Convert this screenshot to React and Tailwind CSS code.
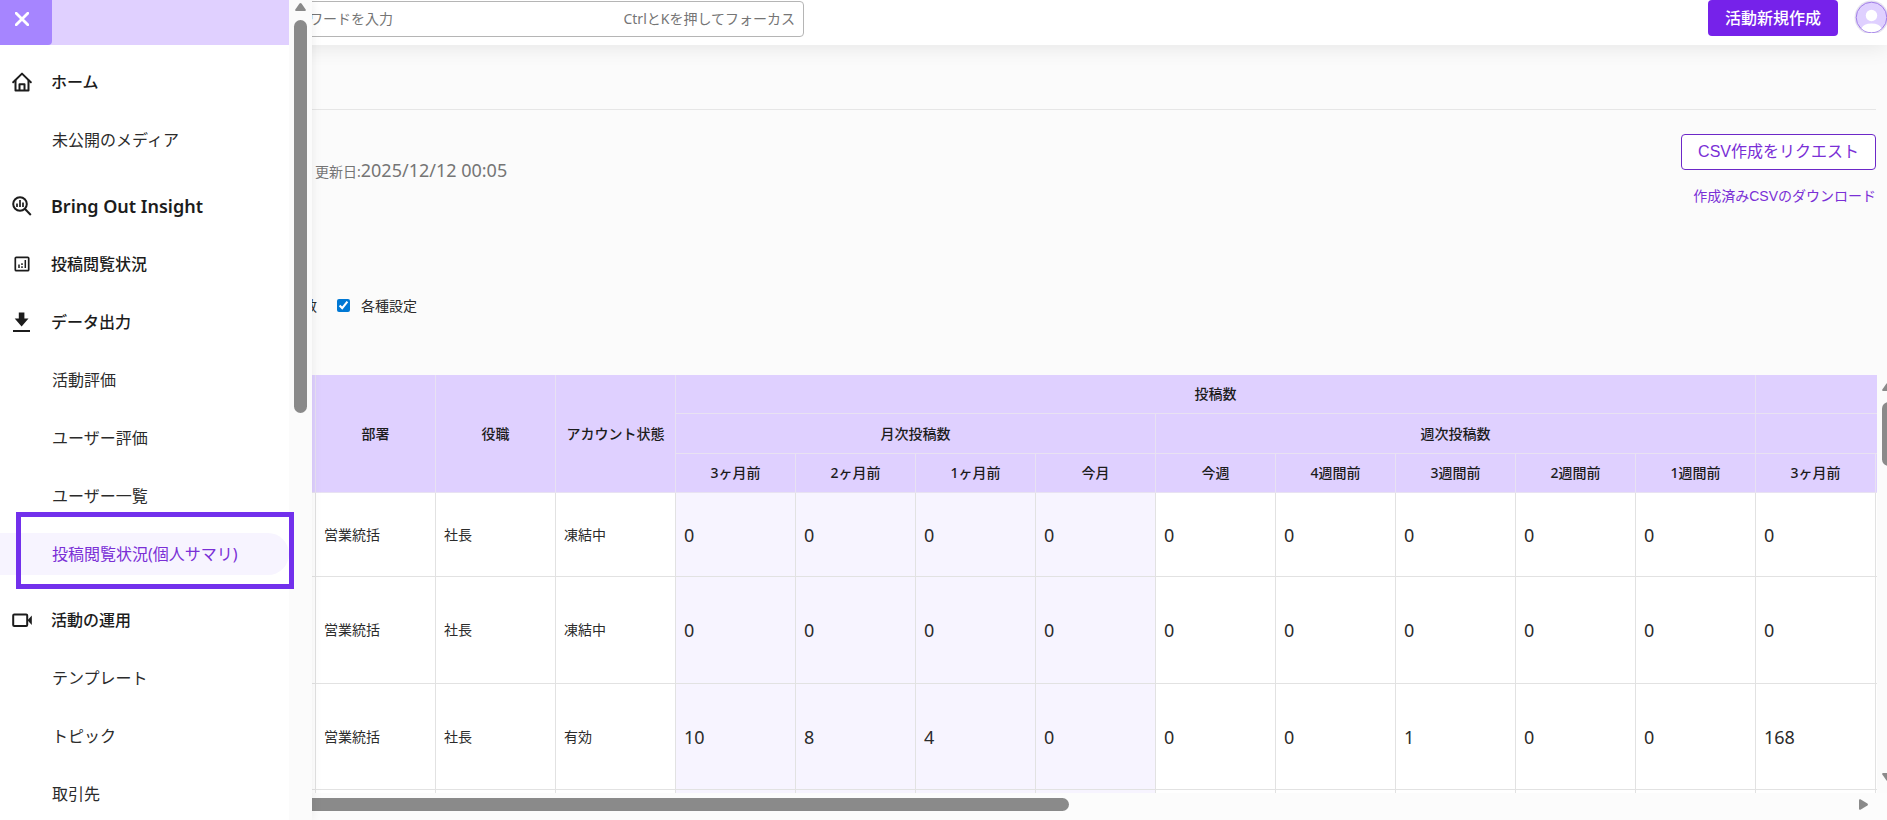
import React, { useState } from "react";
import clsx from "clsx";

const menu = [
  {
    title: "ホーム",
    icon: "home",
    items: ["未公開のメディア"],
  },
  { title: "Bring Out Insight", icon: "insight", items: [] },
  { title: "投稿閲覧状況", icon: "report", items: [] },
  {
    title: "データ出力",
    icon: "download",
    items: [
      "活動評価",
      "ユーザー評価",
      "ユーザー一覧",
      "投稿閲覧状況(個人サマリ)",
    ],
  },
  {
    title: "活動の運用",
    icon: "video",
    items: ["テンプレート", "トピック", "取引先"],
  },
];

const activeItem = "投稿閲覧状況(個人サマリ)";

const monthly = ["3ヶ月前", "2ヶ月前", "1ヶ月前", "今月"];
const weekly = ["今週", "4週間前", "3週間前", "2週間前", "1週間前"];

const rows = [
  {
    height: "h-[84px]",
    info: ["営業統括", "社長", "凍結中"],
    counts: [0, 0, 0, 0, 0, 0, 0, 0, 0, 0],
  },
  {
    height: "h-[107px]",
    info: ["営業統括", "社長", "凍結中"],
    counts: [0, 0, 0, 0, 0, 0, 0, 0, 0, 0],
  },
  {
    height: "h-[106px]",
    info: ["営業統括", "社長", "有効"],
    counts: [10, 8, 4, 0, 0, 0, 1, 0, 0, 168],
  },
  {
    height: "h-[106px]",
    info: ["", "", ""],
    counts: ["", "", "", "", "", "", "", "", "", ""],
  },
];

const MenuIcon = ({ name }) => {
  if (name === "home") {
    return (
      <svg viewBox="0 0 20 20" className="size-5" fill="none" stroke="currentColor" strokeWidth="2" strokeLinejoin="round" strokeLinecap="round">
        <path d="M1.2 10.2 10 1.6l8.800 8.600" />
        <path d="M3.500 8.500V18.500h13V8.500" />
        <path d="M7.500 18v-5.700h5V18" />
      </svg>
    );
  }
  if (name === "insight") {
    return (
      <svg viewBox="0 0 20 20" className="size-5" fill="none" stroke="currentColor" strokeWidth="2">
        <circle cx="8" cy="8" r="6.800" />
        <path d="m12.800 12.800 6 6.200" />
        <path d="M5 7.500v3.500M8 4v7M11 6.500v4.500" strokeWidth="1.700" />
      </svg>
    );
  }
  if (name === "report") {
    return (
      <svg viewBox="0 0 20 20" className="size-5" fill="none" stroke="currentColor" strokeWidth="1.700">
        <rect x="3.300" y="3.300" width="13.400" height="13.400" rx="1" />
        <path d="M7 10.500v3.500M10 12.300V14M10 9.300V11M13.300 6v8" strokeWidth="1.500" />
      </svg>
    );
  }
  if (name === "download") {
    return (
      <svg viewBox="0 0 20 20" className="size-5" fill="currentColor">
        <path d="M6.800 0.500h5.600v6h4.100L9.600 14.500 2.700 6.500h4.100z" />
        <path d="M1 18h17v2H1z" />
      </svg>
    );
  }
  return (
    <svg viewBox="0 0 20 20" className="size-5" fill="none" stroke="currentColor" strokeWidth="2">
      <rect x="1.200" y="4.500" width="14" height="11.500" rx="1" />
      <path d="M15.500 10.200 19.800 5.500v9.500z" fill="currentColor" stroke="none" />
    </svg>
  );
};

const Sidebar = ({ onClose }) => (
  <aside className="absolute inset-y-0 left-0 z-20 flex w-[312px] overflow-hidden bg-white shadow-[0_0_10px_rgba(0,0,0,0.08)]">
    <div className="relative flex-1">
      <div className="flex h-[45px] bg-[#e0d0ff]">
        <button
          type="button"
          aria-label="閉じる"
          onClick={onClose}
          className="flex w-[52px] justify-center rounded-br-sm bg-[#a685ff] pt-3 pr-2 text-white"
        >
          <svg viewBox="0 0 14 14" className="size-3.5" stroke="currentColor" strokeWidth="2.800" strokeLinecap="round">
            <path d="m1.200 1.200 11.600 11.600M12.800 1.200 1.200 12.800" />
          </svg>
        </button>
      </div>
      <nav className="pt-2">
        {menu.map((group) => (
          <div key={group.title} className={clsx(group.items.length > 0 && "pb-2")}>
            <a href="#" className="flex h-[58px] items-center gap-[19px] pl-3 text-base font-medium text-[#1c1c1c]">
              <MenuIcon name={group.icon} />
              <span className={clsx(group.icon === "insight" && "text-lg font-semibold")}>{group.title}</span>
            </a>
            {group.items.map((item) => (
              <div key={item} className="flex h-[58px] items-center">
                <a
                  href="#"
                  className={clsx(
                    "relative flex h-[42px] flex-1 items-center rounded-r-full pl-[52px] text-base",
                    item === activeItem ? "bg-[#f7f4ff] text-[#7a2fd6]" : "text-[#2b2b2b]"
                  )}
                >
                  {item}
                  {item === activeItem && (
                    <span className="absolute -top-[21px] -right-[5px] -bottom-3.5 left-4 z-10 border-5 border-[#7230ec]" />
                  )}
                </a>
              </div>
            ))}
          </div>
        ))}
      </nav>
    </div>
    <div className="flex w-[23px] flex-col items-center bg-[#fbfbfb] pt-[3px]">
      <svg viewBox="0 0 11 8" className="h-2 w-[11px]" fill="#8a8a8a">
        <path d="M4.500.600q1-1.100 2 0L10.700 6.600q.600 1.400-.900 1.400H1.200Q-.300 8 .300 6.600z" />
      </svg>
      <div className="mt-[9px] h-[393px] w-[13px] rounded-full bg-[#8a8a8a]" />
    </div>
  </aside>
);

const Header = () => (
  <header className="relative z-10 flex h-[45px] shrink-0 items-start bg-white pl-[220px] shadow-[0_4px_20px_rgba(0,0,0,0.08)]">
    <div className="mt-px flex h-9 w-[584px] items-center rounded border border-[#b5b5b5] bg-white pr-2 pl-[60px] text-sm text-[#757575]">
      <input
        type="search"
        aria-label="キーワードを入力"
        placeholder="キーワードを入力"
        className="min-w-0 flex-1 outline-none placeholder:text-[#757575]"
      />
      <span>CtrlとKを押してフォーカス</span>
    </div>
    <button type="button" className="ml-auto h-9 rounded bg-[#7622ea] px-[17px] text-base font-medium text-white">
      活動新規作成
    </button>
    <button type="button" aria-label="アカウント" className="ml-4 size-[33px] shrink-0 rounded-full">
      <svg viewBox="0 0 33 33" className="size-[33px]">
        <circle cx="17.500" cy="17.500" r="17" fill="#e6e2f0" />
        <circle cx="17.500" cy="17.500" r="15.300" fill="#dfd0ff" stroke="#a07ce8" />
        <circle cx="17.500" cy="15.500" r="5.700" fill="#fff" />
        <path d="M7.500 28.500a10.300 6.500 0 0 1 20 0 15 15 0 0 1-20 0z" fill="#fff" />
      </svg>
    </button>
  </header>
);

const HeadCell = ({ children, ...props }) => (
  <th {...props} className="border-r border-b border-[#e8e2f2] bg-[#dfd0ff] p-0 text-center font-medium">
    {children}
  </th>
);

const SummaryTable = () => (
  <table className="w-[1920px] table-fixed border-separate border-spacing-0 text-sm text-[#1c1c1c]">
    <thead>
      <tr className="h-[39px]">
        <HeadCell rowSpan={3} />
        <HeadCell rowSpan={3} />
        <HeadCell rowSpan={3}>部署</HeadCell>
        <HeadCell rowSpan={3}>役職</HeadCell>
        <HeadCell rowSpan={3}>アカウント状態</HeadCell>
        <HeadCell colSpan={9}>投稿数</HeadCell>
        <HeadCell colSpan={2} />
      </tr>
      <tr className="h-10">
        <HeadCell colSpan={4}>月次投稿数</HeadCell>
        <HeadCell colSpan={5}>週次投稿数</HeadCell>
        <HeadCell colSpan={2} />
      </tr>
      <tr className="h-[39px]">
        {[...monthly, ...weekly, "3ヶ月前", ""].map((label, index) => (
          <HeadCell key={index}>{label}</HeadCell>
        ))}
      </tr>
    </thead>
    <tbody className="text-[#2b2b2b]">
      {rows.map((row, rowIndex) => (
        <tr key={rowIndex} className={row.height}>
          {["", "", ...row.info].map((value, index) => (
            <td key={index} className="border-r border-b border-[#e2e2e2] bg-white px-2 py-0">
              {value}
            </td>
          ))}
          {[...row.counts, ""].map((value, index) => (
            <td
              key={index}
              className={clsx(
                "border-r border-b border-[#e2e2e2] px-2 py-0 text-lg",
                index < 4 ? "bg-[#f7f4ff]" : "bg-white"
              )}
            >
              {value}
            </td>
          ))}
        </tr>
      ))}
    </tbody>
  </table>
);

const App = () => {
  const [open, setOpen] = useState(true);
  const [settings, setSettings] = useState(true);
  const [posts, setPosts] = useState(true);

  return (
    <div className="relative flex h-screen flex-col overflow-hidden bg-[#fbfbfb] font-['Noto_Sans','Noto_Sans_CJK_JP',sans-serif]">
      {open && <Sidebar onClose={() => setOpen(false)} />}
      <Header />
      <main className="flex min-h-0 flex-1 flex-col">
        <div className="mr-[11px] h-[65px] shrink-0 border-b border-[#e6e6e6]" />
        <div className="mr-[11px] flex h-[110px] shrink-0 items-start justify-between pt-6 pl-[315px]">
          <p className="pt-6 text-sm leading-6 text-[#757575]">
            更新日:<time className="text-lg leading-6">2025/12/12 00:05</time>
          </p>
          <div className="flex flex-col items-end gap-4 font-['Liberation_Sans','Noto_Sans_CJK_JP',sans-serif] text-[#7a2fd6]">
            <button type="button" className="h-9 rounded border border-[#6d28c8] bg-white px-4 text-base">
              CSV作成をリクエスト
            </button>
            <a href="#" className="text-sm">
              作成済みCSVのダウンロード
            </a>
          </div>
        </div>
        <div className="flex h-[155px] shrink-0 items-center gap-5 pt-4 pl-[237px] text-sm text-[#2b2b2b]">
          <label className="flex w-20 items-center justify-end gap-[11px]">
            <input
              type="checkbox"
              checked={posts}
              onChange={(e) => setPosts(e.target.checked)}
              className="size-[13px] accent-[#0078d4]"
            />
            閲覧数
          </label>
          <label className="flex items-center gap-[11px]">
            <input
              type="checkbox"
              checked={settings}
              onChange={(e) => setSettings(e.target.checked)}
              className="size-[13px] accent-[#0078d4]"
            />
            各種設定
          </label>
        </div>
        <div className="flex min-h-0 flex-1 pl-[76px]">
          <div className="min-w-0 flex-1 overflow-hidden">
            <SummaryTable />
          </div>
          <div className="flex w-[10px] flex-col items-start overflow-hidden pt-2 pb-3 pl-[5px]">
            <svg viewBox="0 0 11 8" className="h-2 w-[11px] shrink-0" fill="#8a8a8a">
              <path d="M4.500.600q1-1.100 2 0L10.700 6.600q.600 1.400-.900 1.400H1.200Q-.300 8 .300 6.600z" />
            </svg>
            <div className="mt-[11px] h-16 w-[13px] shrink-0 rounded-full bg-[#8a8a8a]" />
            <svg viewBox="0 0 11 8" className="mt-auto h-2 w-[11px] shrink-0 rotate-180" fill="#8a8a8a">
              <path d="M4.500.600q1-1.100 2 0L10.700 6.600q.600 1.400-.900 1.400H1.200Q-.300 8 .300 6.600z" />
            </svg>
          </div>
        </div>
        <div className="flex h-[27px] shrink-0 items-start justify-between bg-[#fcfcfc] pt-[5px] pr-[19px] pl-[100px]">
          <div className="h-[13px] w-[969px] rounded-full bg-[#8a8a8a]" />
          <svg viewBox="0 0 9 11" className="mt-px h-[11px] w-[9px]" fill="#8a8a8a">
            <path d="M0 1.200Q0-.300 1.400.300L8.400 4.500q1.100 1 0 2L1.400 10.700Q0 11.300 0 9.800z" />
          </svg>
        </div>
      </main>
    </div>
  );
};

export default App;
